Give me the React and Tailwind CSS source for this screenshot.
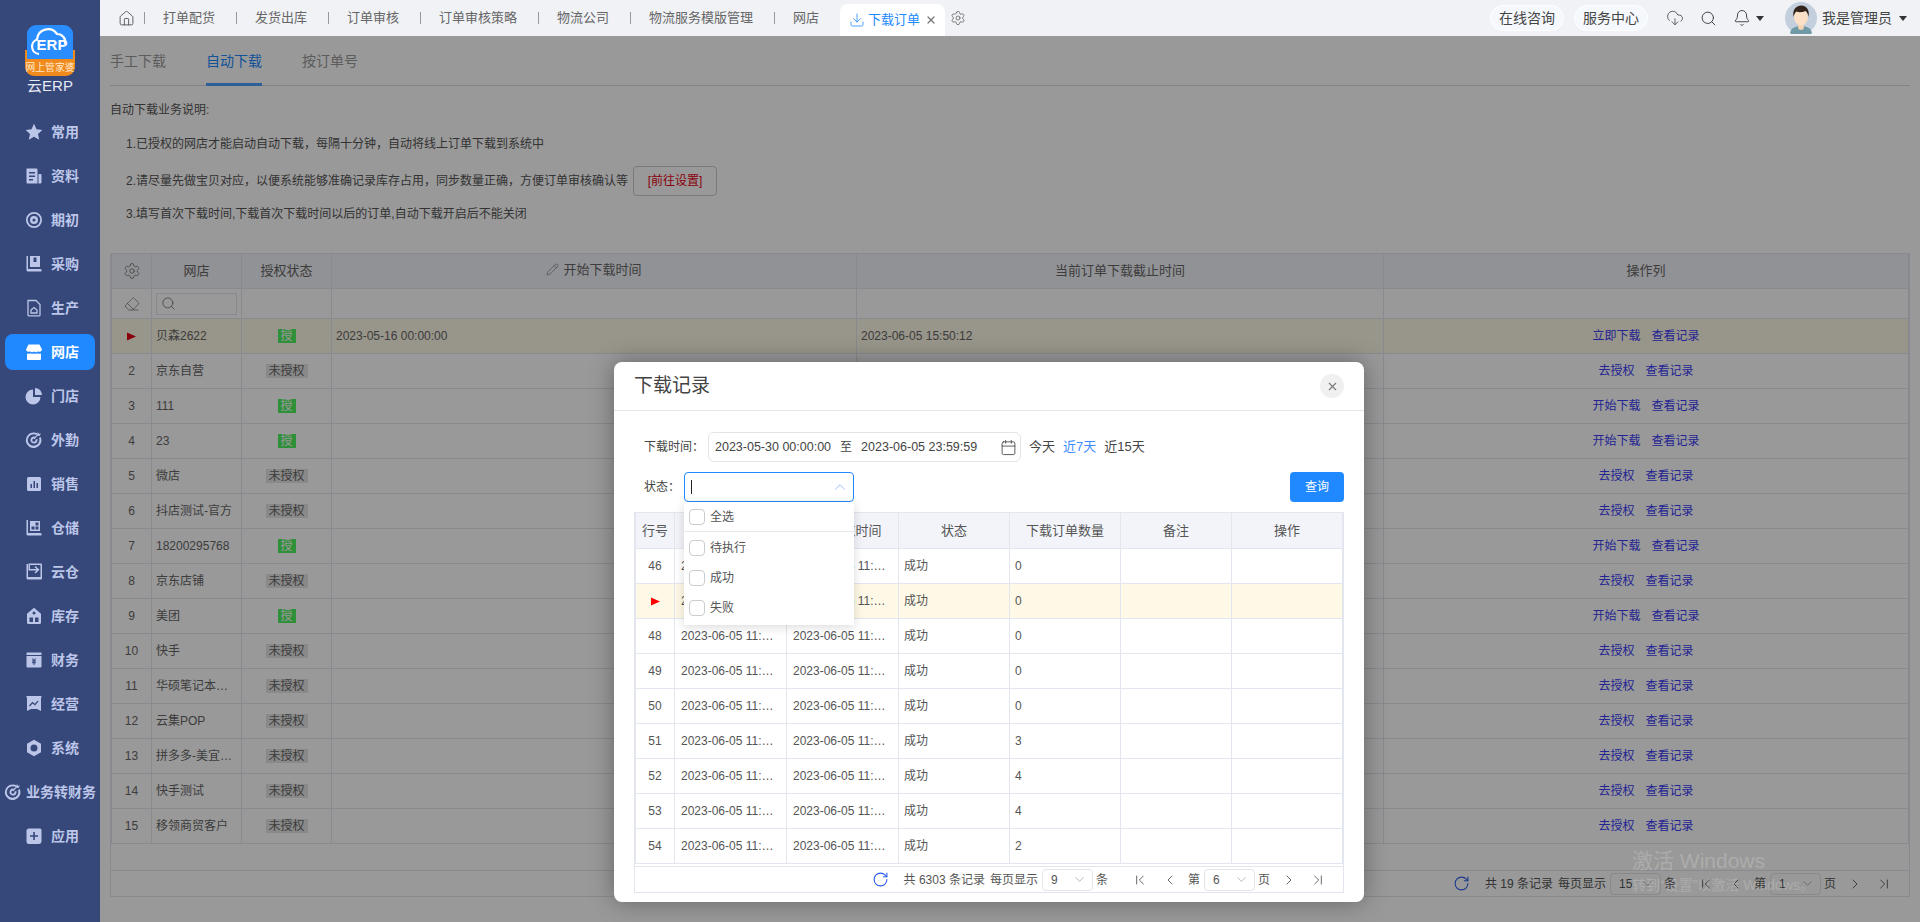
import React from 'react';
import {
    Home, Settings, X, Download, CloudDownload, Search, Bell, Pencil, Eraser, Calendar,
    ChevronUp, ChevronDown, ChevronFirst, ChevronLast, ChevronLeft, ChevronRight, RotateCw,
} from 'lucide-react';

const Glyph = ({ children }) => (
    <svg width="18" height="18" viewBox="0 0 18 18" fill="currentColor" className="shrink-0">
        {children}
    </svg>
);

const navIcons = {
    star: <path d="M9 .8l2.5 5.4 5.8.7-4.3 4 1.2 5.8L9 13.8l-5.2 2.9L5 10.9.7 6.9l5.8-.7z" />,
    doc: <><path fillRule="evenodd" d="M1.5 1.5h10a1 1 0 011 1V16.500h-10a1 1 0 01-1-1zM4 5v1.500h6V5zm0 3.500V10h6V8.500zM4 12v1.500h4V12z" /><path d="M13.500 7h2a1 1 0 011 1v7.500a1 1 0 01-1 1h-2z" /></>,
    ring: <path fillRule="evenodd" d="M9 1a8 8 0 110 16A8 8 0 019 1zm0 1.800a6.200 6.200 0 100 12.400A6.200 6.200 0 009 2.800zM9 5a4 4 0 110 8 4 4 0 010-8zm0 2.400a1.600 1.600 0 100 3.200 1.600 1.600 0 000-3.200z" />,
    box: <path fillRule="evenodd" d="M1.500 1H3v13h12.500a1 1 0 011 1v1.500H3a1.500 1.500 0 01-1.500-1.500zM5 1h10v11H5zm3.500 1.500V7h3V2.500z" />,
    file: <g fill="none" stroke="currentColor" strokeWidth="1.300"><path d="M3 1.500h8l4 4V16a.8.8 0 01-.8.8H3.800A.8.8 0 013 16z" /><path d="M6 11l3-2.500 3 2.500v3H6z" /></g>,
    store: <path fillRule="evenodd" d="M3.500 1.500h11L17 6.500a2.500 2.500 0 01-4 1.800 3 3 0 01-4 .2 3 3 0 01-4-.2 2.500 2.500 0 01-4-1.800zM2 10.500a4 4 0 003.300-.3 4.500 4.500 0 003.700.3 4.500 4.500 0 003.700-.3 4 4 0 003.300.3V16a1 1 0 01-1 1H3a1 1 0 01-1-1z" />,
    pie: <><path d="M8 2.500V10h7.500A7.500 7.500 0 118 2.500z" /><path d="M10 1a7 7 0 017 7h-7z" /></>,
    target: <><path fillRule="evenodd" d="M9 1.500a7.800 7.800 0 013.500.8l-1 1.700A5.800 5.800 0 1014 7l1.700-1A7.800 7.800 0 119 1.500zm0 4a3.500 3.500 0 011.200.2l-1 1.800a1.600 1.600 0 101.300 1.300l1.800-1A3.500 3.500 0 119 5.500z" /><path d="M13 1l1 2 2-.5-1.500 2.500-2-.2-3 3.500-1-1 3.300-3.300z" /></>,
    bars: <path fillRule="evenodd" d="M3.500 2h11A1.500 1.500 0 0116 3.500v11a1.500 1.500 0 01-1.500 1.500h-11A1.500 1.500 0 012 14.500v-11A1.500 1.500 0 013.500 2zM5.500 9v4H7V9zm3-3v7H10V6zm3 2v5H13V8z" />,
    shelf: <path fillRule="evenodd" d="M1.500 1H3v13h12.500a1 1 0 011 1v1.500H3A1.500 1.500 0 011.500 15zM5 2h10v10H5zm1.500 5.500v3h3v-3zm4-4V6.500h3v-3zm0 4v3h3v-3z" />,
    arrowBox: <path fillRule="evenodd" d="M1.500 1H3v13h12.500v-12H5v4h6.500L9.500 4l1-1 4 3.800-4 3.800-1-1 2-2H3.500V.5h12.500a1 1 0 011 1V15.500a1 1 0 01-1 1H3A1.500 1.500 0 011.500 15z" />,
    house: <path fillRule="evenodd" d="M9 .8l7 6V15.500a1.500 1.500 0 01-1.500 1.500h-11A1.500 1.500 0 012 15.500v-8.700zM9 4.500a1.500 1.500 0 100 3 1.500 1.500 0 000-3zm-4.500 6v4.500h3.500v-4.500zm5.500 0v4.500h3.500v-4.500z" />,
    money: <><rect x="1.500" y="1.500" width="15" height="2.500" rx=".5" /><path fillRule="evenodd" d="M1.500 5h15v10.500a1 1 0 01-1 1h-13a1 1 0 01-1-1zM6.800 7.500l1.500 2H7v1h1.500v.8H7v1h1.500V14h1v-1.700H11v-1H9.500v-.8H11v-1H9.700l1.500-2h-1.200L9 9 8 7.500z" /></>,
    chart: <path fillRule="evenodd" d="M1.500 1h15v1.500H16V16l-4-2H6l-4 2V2.500h-.5zM4 10.500l1 1 2.500-3 2.500 2 3.500-4-1-.8-2.600 3-2.500-2-3.400 3.800z" />,
    hex: <path fillRule="evenodd" d="M9 .8l7 4v8.400l-7 4-7-4V4.800zm0 4.700a3.500 3.500 0 100 7 3.500 3.500 0 000-7z" />,
    plus: <path fillRule="evenodd" d="M4 1.500h11A1.500 1.500 0 0116.500 3v11a3 3 0 01-3 3H4A2.500 2.500 0 011.500 14.500V4A2.500 2.500 0 014 1.500zM8.200 5v3.200H5v1.600h3.200V13h1.600V9.800H13V8.200H9.800V5z" />,
};

const navItems = [
    ['常用', 'star'], ['资料', 'doc'], ['期初', 'ring'], ['采购', 'box'], ['生产', 'file'],
    ['网店', 'store'], ['门店', 'pie'], ['外勤', 'target'], ['销售', 'bars'], ['仓储', 'shelf'],
    ['云仓', 'arrowBox'], ['库存', 'house'], ['财务', 'money'], ['经营', 'chart'], ['系统', 'hex'],
    ['业务转财务', 'target'], ['应用', 'plus'],
];

const topTabs = ['打单配货', '发货出库', '订单审核', '订单审核策略', '物流公司', '物流服务模版管理', '网店'];

const shops = [
    ['贝森2622', true, '立即下载'], ['京东自营', false, '去授权'], ['111', true, '开始下载'],
    ['23', true, '开始下载'], ['微店', false, '去授权'], ['抖店测试-官方', false, '去授权'],
    ['18200295768', true, '开始下载'], ['京东店铺', false, '去授权'], ['美团', true, '开始下载'],
    ['快手', false, '去授权'], ['华硕笔记本专卖店', false, '去授权'], ['云集POP', false, '去授权'],
    ['拼多多-美宜佳店', false, '去授权'], ['快手测试', false, '去授权'], ['移领商贸客户', false, '去授权'],
];

const records = [
    [46, 0], [47, 0], [48, 0], [49, 0], [50, 0], [51, 3], [52, 4], [53, 4], [54, 2],
];

const Logo = () => (
    <svg width="50" height="52" viewBox="0 0 50 52">
        <path d="M0 25h50v17a9 9 0 01-9 9H9a9 9 0 01-9-9z" fill="#f08a1c" />
        <path d="M2 9a9 9 0 019-9h28a9 9 0 019 9v25H2z" fill="#2a8dff" />
        <path d="M14 29a7.500 7.500 0 01-2-14.500A11 11 0 0132 9a8 8 0 018 10" fill="none" stroke="#fff" strokeWidth="2.200" />
        <text x="27" y="25" textAnchor="middle" fontSize="15" fontWeight="700" fill="#fff">ERP</text>
        <text x="25" y="46" textAnchor="middle" fontSize="9.800" fill="#ffe9cf">网上管家婆</text>
    </svg>
);

const Sidebar = () => (
    <aside className="flex w-[100px] shrink-0 flex-col bg-[#36477a] text-[#bcc6e8]">
        <div className="flex h-[114px] flex-col items-center pt-[25px]">
            <Logo />
            <div className="-mt-px text-[15px] leading-5 text-[#e6e9f2]">云ERP</div>
        </div>
        <nav className="flex flex-col gap-2 px-[5px]">
            {navItems.map(([label, icon]) => {
                const active = label === '网店';
                const wide = label.length > 2;
                return (
                    <div
                        key={label}
                        className={`flex h-9 items-center rounded-lg text-sm font-bold ${wide ? 'whitespace-nowrap' : 'pl-[20px] gap-[8px]'} ${active ? 'bg-[#2189ff] text-white' : ''}`}
                    >
                        {wide ? <span className="-ml-[1px] mr-[4px]"><Glyph>{navIcons[icon]}</Glyph></span> : <Glyph>{navIcons[icon]}</Glyph>}
                        {label}
                    </div>
                );
            })}
        </nav>
    </aside>
);

const Avatar = () => (
    <svg width="32" height="32" viewBox="0 0 32 32">
        <circle cx="16" cy="16" r="16" fill="#c3cfdc" />
        <path d="M5 31c1-5 5-7 11-7s10 2 11 7a16 16 0 01-22 0z" fill="#6f9aa6" />
        <path d="M13 20h6v5a3 3 0 01-6 0z" fill="#f3d2b4" />
        <ellipse cx="16" cy="15" rx="7" ry="8.500" fill="#fbe0c6" />
        <path d="M8.500 15C7 7 12 3.500 16.500 3.500S25 7.500 23.500 15c-.5-3-1.500-5-3-6-3 1.500-7 1.500-9 .5-1.500 1-2.500 3-3 5.500z" fill="#33241c" />
    </svg>
);

const Caret = () => <span className="h-0 w-0 border-x-[4px] border-t-[5px] border-x-transparent border-t-[#333]" />;

const TopBar = () => (
    <header className="flex h-9 shrink-0 items-center bg-[#f0f2f6] pl-[18px] text-[13px] text-[#666]">
        <Home size={17} strokeWidth={1.300} className="mr-[9px] text-[#555]" />
        {topTabs.map((t) => (
            <React.Fragment key={t}>
                <span className="h-3 w-px bg-[#999]" />
                <span className="ml-[18px] mr-[21px] whitespace-nowrap">{t}</span>
            </React.Fragment>
        ))}
        <div className="mt-1 flex h-8 w-[105px] items-center rounded-t-lg bg-white pl-[9px] text-[#2189ff]">
            <Download size={16} strokeWidth={1.200} />
            <span className="ml-[3px]">下载订单</span>
            <X size={12} strokeWidth={2.500} className="ml-[5px] text-[#777]" />
        </div>
        <Settings size={16} strokeWidth={1.100} className="ml-[5px] text-[#555]" />
        <div className="ml-auto flex items-center text-sm text-[#444]">
            <span className="flex h-[26px] w-[74px] items-center justify-center rounded-full border border-white bg-[#f5f8fd]">在线咨询</span>
            <span className="ml-[10px] flex h-[26px] w-[74px] items-center justify-center rounded-full border border-white bg-[#f5f8fd]">服务中心</span>
            <CloudDownload size={18} strokeWidth={1.100} className="ml-[18px]" />
            <Search size={17} strokeWidth={1.400} className="ml-4" />
            <Bell size={18} strokeWidth={1.300} className="ml-4" />
            <span className="ml-[5px] flex"><Caret /></span>
            <span className="ml-[21px]"><Avatar /></span>
            <span className="ml-[5px] whitespace-nowrap">我是管理员</span>
            <span className="ml-[7px] mr-[13px] flex"><Caret /></span>
        </div>
    </header>
);

const PageSelect = ({ value }) => (
    <span className="flex h-[22px] w-[51px] items-center justify-between rounded border border-[#e3e5ea] pl-2 pr-[5px] text-[#555]">
        {value}
        <ChevronDown size={15} strokeWidth={1.100} className="text-[#999]" />
    </span>
);

// 底部分页条，主表和弹窗共用
const Pager = ({ total, size, page, firstGap, className }) => (
    <div className={`flex items-center justify-end pr-[17px] text-xs text-[#555] ${className}`}>
        <RotateCw size={17} strokeWidth={1.500} className="mr-[15px] text-[#2c5cf0]" />
        <span className="whitespace-nowrap">共 {total} 条记录</span>
        <span className="ml-[5px] mr-[4px] whitespace-nowrap">每页显示</span>
        <PageSelect value={size} />
        <span className="ml-[3px]">条</span>
        <ChevronFirst size={16} strokeWidth={1.200} className={`${firstGap} text-[#444]`} />
        <ChevronLeft size={16} strokeWidth={1.200} className="ml-[14px] text-[#444]" />
        <span className="ml-[10px] mr-[4px]">第</span>
        <PageSelect value={page} />
        <span className="ml-[3px]">页</span>
        <ChevronRight size={16} strokeWidth={1.200} className="ml-[11px] text-[#444]" />
        <ChevronLast size={16} strokeWidth={1.200} className="ml-[13px] text-[#444]" />
    </div>
);

const Flag = ({ color }) => (
    <svg width="9" height="9" viewBox="0 0 9 9" className="mx-auto block">
        <path d="M0 .5L9 4.500 0 8.500z" fill={color} />
    </svg>
);

const cellBorder = 'border border-[#e3e6ef] text-xs';
const thMain = 'border border-[#e3e6ef] bg-[#f2f4f9] px-[5px] text-[13px] font-normal text-[#666]';
const tdMain = `${cellBorder} px-1 text-[#666]`;

const ShopTable = () => (
    <div className="mt-[29px] border-x border-b border-[#e3e6ef]">
        <table className="w-full table-fixed border-collapse">
            <colgroup>
                <col className="w-[40px]" />
                <col className="w-[90px]" />
                <col className="w-[90px]" />
                <col className="w-[525px]" />
                <col className="w-[527px]" />
                <col />
            </colgroup>
            <thead>
                <tr className="h-[35px]">
                    <th className={thMain}><Settings size={18} strokeWidth={1} className="mx-auto" /></th>
                    <th className={thMain}>网店</th>
                    <th className={thMain}>授权状态</th>
                    <th className={thMain}>
                        <span className="inline-flex items-center gap-1"><Pencil size={13} strokeWidth={1.100} />开始下载时间</span>
                    </th>
                    <th className={thMain}>当前订单下载截止时间</th>
                    <th className={thMain}>操作列</th>
                </tr>
                <tr className="h-[30px]">
                    <td className={tdMain}><Eraser size={16} strokeWidth={1} className="mx-auto" /></td>
                    <td className={tdMain}>
                        <div className="flex h-[22px] items-center border border-[#e3e5ea] pl-[4px]">
                            <Search size={15} strokeWidth={1.200} />
                        </div>
                    </td>
                    <td className={tdMain} />
                    <td className={tdMain} />
                    <td className={tdMain} />
                    <td className={tdMain} />
                </tr>
            </thead>
            <tbody>
                {shops.map(([name, authed, action], i) => (
                    <tr key={name} className={`h-[35px] ${i === 0 ? 'bg-[#fef8e6]' : ''}`}>
                        <td className={`${tdMain} text-center`}>{i === 0 ? <Flag color="#e60012" /> : i + 1}</td>
                        <td className={`${tdMain} truncate`}>{name}</td>
                        <td className={`${tdMain} text-center`}>
                            {authed ? (
                                <span className="inline-flex h-[14px] w-[18px] items-center justify-center bg-[#4ef05e] text-white">授</span>
                            ) : (
                                <span className="inline-flex h-[14px] w-[42px] items-center justify-center bg-[#e4e4e4]">未授权</span>
                            )}
                        </td>
                        <td className={tdMain}>{i === 0 ? '2023-05-16 00:00:00' : ''}</td>
                        <td className={tdMain}>{i === 0 ? '2023-06-05 15:50:12' : ''}</td>
                        <td className={`${cellBorder} text-center text-[#3b3bf5]`}>
                            <span>{action}</span>
                            <span className="ml-[11px]">查看记录</span>
                        </td>
                    </tr>
                ))}
            </tbody>
        </table>
        <div className="h-[27px] border-b border-[#e3e6ef]" />
        <Pager total={19} size={15} page={1} firstGap="ml-[22px]" className="h-[25px]" />
    </div>
);

const Check = ({ label }) => (
    <div className="flex items-center gap-[5px]">
        <span className="h-4 w-4 rounded-sm border border-[#ccc] bg-white" />
        {label}
    </div>
);

const thRec = 'border border-[#e3e6ef] bg-[#f2f4f9] px-[5px] text-[13px] font-normal text-[#555]';
const tdRec = 'border border-[#e3e6ef] px-[5px] text-xs text-[#555] truncate';
const tdDate = 'border border-[#e3e6ef] px-[6px] text-xs text-[#555] truncate';

const RecordDialog = () => (
    <div className="absolute left-[514px] top-[326px] h-[540px] w-[750px] rounded-lg bg-white shadow-[0_0_24px_rgba(0,0,0,0.35)]">
        <div className="flex h-[49px] items-center justify-between border-b border-[#e5e5e5] pl-[20px] pr-5">
            <h2 className="text-[19px] font-normal text-[#444]">下载记录</h2>
            <span className="flex h-6 w-6 items-center justify-center rounded-full bg-[#f0f0f0] text-[#777]"><X size={13} /></span>
        </div>
        <div className="px-5 pt-[21px]">
            <div className="flex h-[30px] items-center text-xs text-[#444]">
                <span className="w-[74px] pl-[10px]">下载时间：</span>
                <div className="flex h-[30px] w-[313px] items-center rounded-md border border-[#e4e4e4] pl-[6px] text-[12.500px]">
                    <span>2023-05-30 00:00:00</span>
                    <span className="ml-[9px] text-xs">至</span>
                    <span className="ml-[9px]">2023-06-05 23:59:59</span>
                    <Calendar size={17} strokeWidth={1.200} className="ml-auto mr-[3px]" />
                </div>
                <div className="ml-2 flex gap-2 text-[13px]">
                    <span>今天</span>
                    <span className="text-[#3d8bff]">近7天</span>
                    <span>近15天</span>
                </div>
            </div>
            <div className="relative mt-[10px] flex h-[30px] items-center justify-between text-xs text-[#444]">
                <div className="flex items-center">
                    <span className="w-[50px] pl-[10px]">状态：</span>
                    <div className="flex h-[30px] w-[170px] items-center justify-between rounded border border-[#2189ff] pl-[6px] pr-[4px]">
                        <span className="h-[14px] w-px bg-[#222]" />
                        <ChevronUp size={18} strokeWidth={1} className="text-[#7fa9f5]" />
                    </div>
                </div>
                <button className="h-[30px] w-[54px] rounded-sm bg-[#2189ff] text-white">查询</button>
                <div className="absolute left-[50px] top-[30px] z-10 h-[123px] w-[170px] bg-white text-xs text-[#555] shadow-[0_2px_10px_rgba(0,0,0,0.15)]">
                    <div className="flex h-[30px] items-center border-b border-[#e8e8e8] pl-[5px]"><Check label="全选" /></div>
                    <div className="flex flex-col gap-[14px] pl-[5px] pt-2">
                        <Check label="待执行" />
                        <Check label="成功" />
                        <Check label="失败" />
                    </div>
                </div>
            </div>
            <div className="mt-[10px] border-x border-b border-[#e3e6ef]">
                <table className="w-full table-fixed border-collapse">
                    <colgroup>
                        <col className="w-[39px]" />
                        <col className="w-[112px]" />
                        <col className="w-[112px]" />
                        <col className="w-[111px]" />
                        <col className="w-[111px]" />
                        <col className="w-[111px]" />
                        <col />
                    </colgroup>
                    <thead>
                        <tr className="h-9">
                            {['行号', '下载开始时间', '下载结束时间', '状态', '下载订单数量', '备注', '操作'].map((h) => (
                                <th key={h} className={thRec}>{h}</th>
                            ))}
                        </tr>
                    </thead>
                    <tbody>
                        {records.map(([no, count]) => {
                            const current = no === 47;
                            return (
                                <tr key={no} className={`h-[35px] ${current ? 'bg-[#fef8e6]' : ''}`}>
                                    <td className={`${tdRec} text-center`}>{current ? <Flag color="#ff0000" /> : no}</td>
                                    <td className={tdDate}>2023-06-05 11:50:12</td>
                                    <td className={tdDate}>2023-06-05 11:50:13</td>
                                    <td className={tdRec}>成功</td>
                                    <td className={tdRec}>{count}</td>
                                    <td className={tdRec} />
                                    <td className={tdRec} />
                                </tr>
                            );
                        })}
                    </tbody>
                </table>
                <Pager total={6303} size={9} page={6} firstGap="ml-6" className="mt-[2px] h-[26px] border-t border-[#e3e6ef]" />
            </div>
        </div>
    </div>
);

const Content = () => (
    <main className="relative flex-1 overflow-hidden bg-white px-[10px]">
        <div className="flex h-[50px] items-center gap-10 border-b border-[#ddd] text-sm text-[#999]">
            <span>手工下载</span>
            <span className="relative flex h-full items-center text-[#2189ff]">
                自动下载
                <span className="absolute -bottom-px left-0 h-[3px] w-full bg-[#4d9fff]" />
            </span>
            <span>按订单号</span>
        </div>
        <div className="mt-[14px] text-xs leading-5 text-[#555]">
            <p>自动下载业务说明:</p>
            <p className="mt-[14px] pl-4">1.已授权的网店才能启动自动下载，每隔十分钟，自动将线上订单下载到系统中</p>
            <div className="mt-3 flex items-center pl-4">
                <span>2.请尽量先做宝贝对应，以便系统能够准确记录库存占用，同步数量正确，方便订单审核确认等</span>
                <span className="ml-[5px] flex h-[30px] w-[84px] items-center justify-center rounded-sm border border-[#ccc] text-[#e60012]">[前往设置]</span>
            </div>
            <p className="mt-2 pl-4">3.填写首次下载时间,下载首次下载时间以后的订单,自动下载开启后不能关闭</p>
        </div>
        <ShopTable />
        <div className="absolute inset-0 bg-black/40" />
        <RecordDialog />
    </main>
);

export default function App() {
    return (
        <div className="relative flex h-screen overflow-hidden font-['Liberation_Sans','Noto_Sans_CJK_SC',sans-serif]">
            <Sidebar />
            <div className="flex min-w-0 flex-1 flex-col">
                <TopBar />
                <Content />
            </div>
            {/* 系统水印 */}
            <div className="pointer-events-none absolute left-[1632px] top-[848px] whitespace-nowrap text-white/20">
                <div className="text-[21px] leading-[26px]">激活 Windows</div>
                <div className="mt-px text-[14px] leading-5">转到“设置”以激活 Windows。</div>
            </div>
        </div>
    );
}
